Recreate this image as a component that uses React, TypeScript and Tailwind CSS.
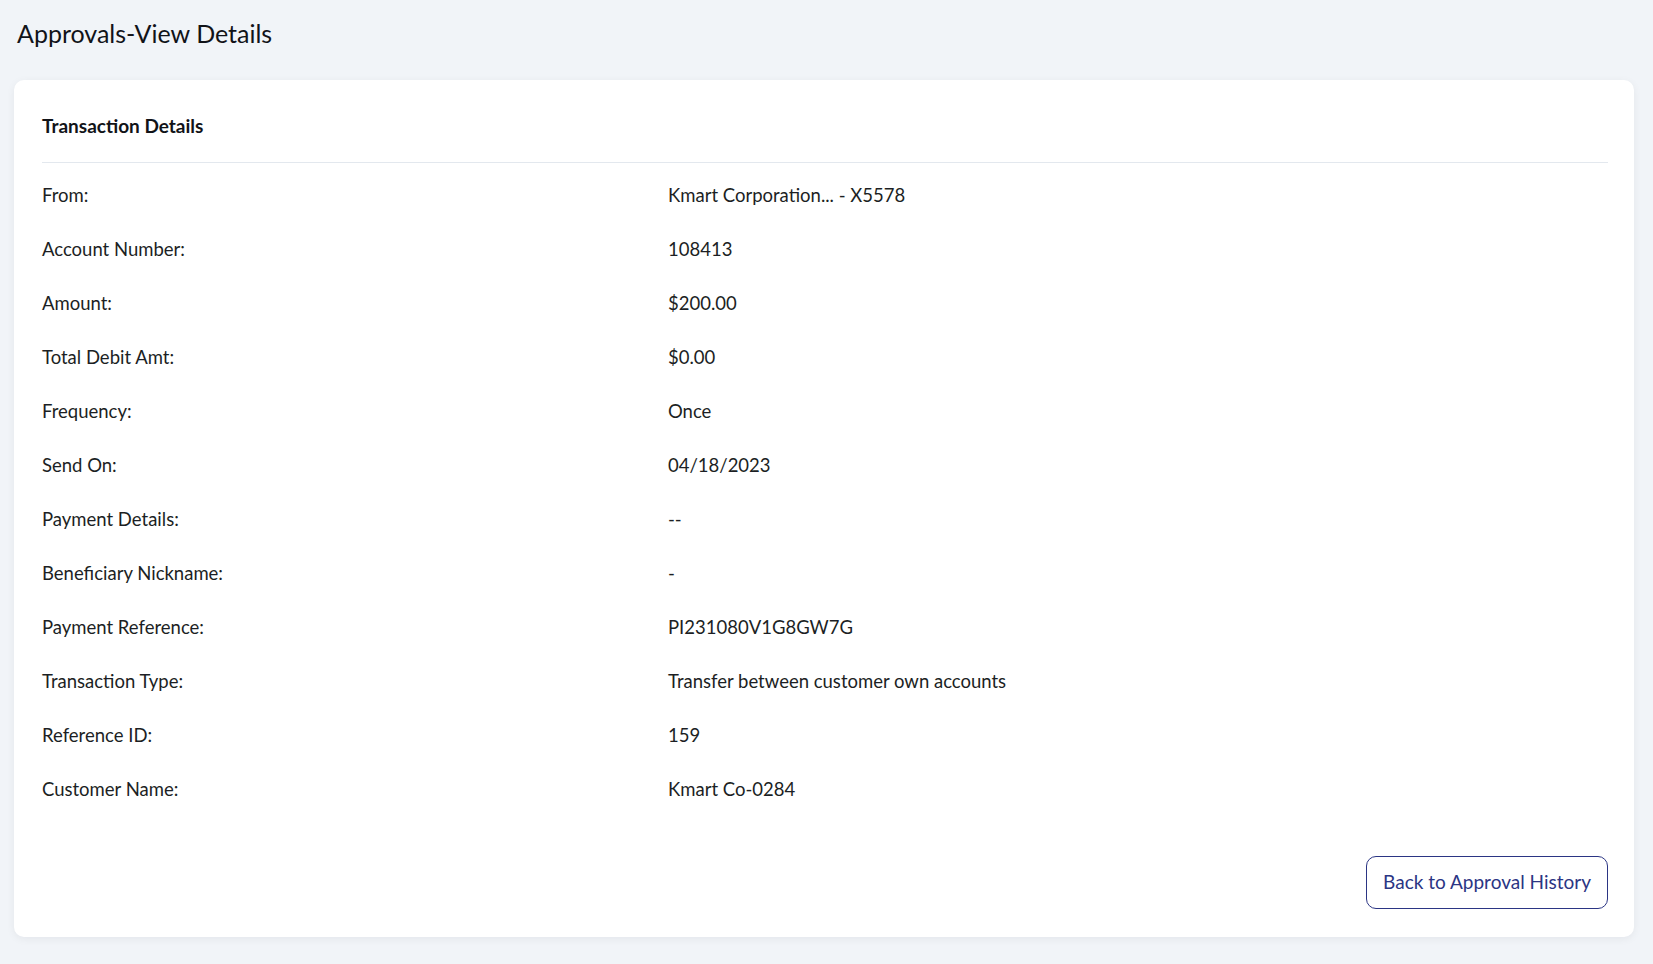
import React from 'react';

const rows: { label: string; value: string }[] = [
  { label: 'From:', value: 'Kmart Corporation... - X5578' },
  { label: 'Account Number:', value: '108413' },
  { label: 'Amount:', value: '$200.00' },
  { label: 'Total Debit Amt:', value: '$0.00' },
  { label: 'Frequency:', value: 'Once' },
  { label: 'Send On:', value: '04/18/2023' },
  { label: 'Payment Details:', value: '--' },
  { label: 'Beneficiary Nickname:', value: '-' },
  { label: 'Payment Reference:', value: 'PI231080V1G8GW7G' },
  { label: 'Transaction Type:', value: 'Transfer between customer own accounts' },
  { label: 'Reference ID:', value: '159' },
  { label: 'Customer Name:', value: 'Kmart Co-0284' },
];

export default function App() {
  return (
    <div
      className="min-h-screen bg-[#f1f4f8] text-[#1c1f24]"
      style={{ fontFamily: 'Lato, "Noto Sans", sans-serif' }}
    >
      <div className="h-[80px] pl-[17px] pt-[16px]">
        <h1 className="text-[25px] leading-[34px] font-normal text-[#111318]">Approvals-View Details</h1>
      </div>

      <div className="ml-[14px] mr-[19px] rounded-[10px] bg-white pl-[28px] pr-[26px] pt-[28px] pb-[28px] shadow-[0_2px_8px_rgba(15,23,42,0.06)]">
        <div className="border-b border-[#e3e8ee] pt-[5px] pb-[23px]">
          <h2 className="text-[19px] leading-[26px] font-bold text-[#111318]">Transaction Details</h2>
        </div>

        <div className="pt-[6px]">
          {rows.map((r) => (
            <div key={r.label} className="flex h-[54px] items-center text-[18.5px]">
              <div className="w-[626px] shrink-0">{r.label}</div>
              <div>{r.value}</div>
            </div>
          ))}
        </div>

        <div className="mt-[39px] flex justify-end">
          <button
            type="button"
            className="h-[53px] w-[242px] rounded-[10px] border border-[#2b3584] bg-white text-[19px] text-[#2b3584]"
          >
            Back to Approval History
          </button>
        </div>
      </div>
    </div>
  );
}
